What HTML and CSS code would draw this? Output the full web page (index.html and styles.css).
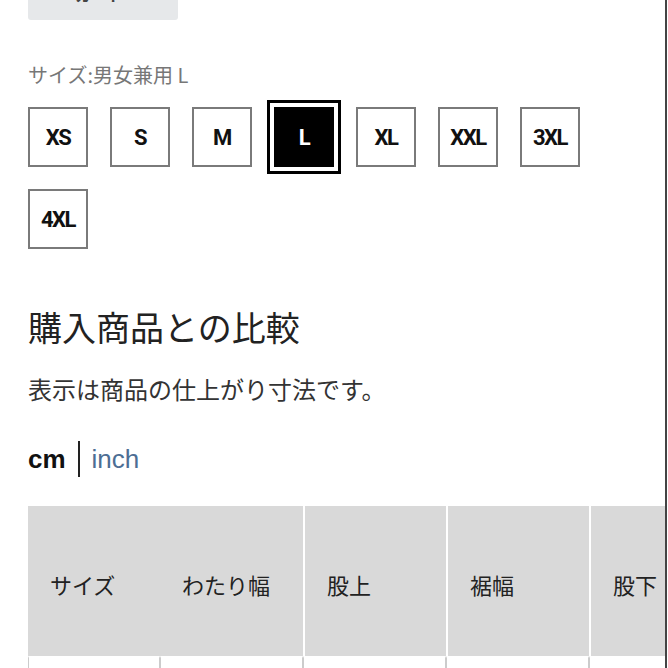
FILE: index.html
```html
<!DOCTYPE html>
<html lang="ja">

<head>
    <meta charset="UTF-8">
    <title>サイズ</title>
    <link rel="stylesheet" href="styles.css">
</head>

<body>
    <div class="page">
        <div class="top-button"><span>カート</span></div>

        <p class="size-label">サイズ:男女兼用 L</p>
        <div class="sizes">
            <button class="size">XS</button>
            <button class="size">S</button>
            <button class="size">M</button>
            <button class="size selected">L</button>
            <button class="size">XL</button>
            <button class="size">XXL</button>
            <button class="size">3XL</button>
            <button class="size">4XL</button>
        </div>

        <h2 class="compare-title">購入商品との比較</h2>
        <p class="compare-note">表示は商品の仕上がり寸法です。</p>

        <div class="units">
            <span class="unit active">cm</span>
            <span class="unit-divider"></span>
            <span class="unit">inch</span>
        </div>

        <div class="table-wrap">
            <table class="size-table">
                <thead>
                    <tr>
                        <th class="col-size">サイズ</th>
                        <th>わたり幅</th>
                        <th class="sep">股上</th>
                        <th class="sep">裾幅</th>
                        <th class="sep">股下</th>
                        <th class="sep">総丈</th>
                    </tr>
                </thead>
                <tbody>
                    <tr>
                        <td class="col-size">L</td>
                        <td>37.5</td>
                        <td>31.5</td>
                        <td>23</td>
                        <td>76</td>
                        <td>104</td>
                    </tr>
                </tbody>
            </table>
        </div>
    </div>
</body>

</html>
```

FILE: styles.css
```css
* {
    box-sizing: border-box;
}

body {
    margin: 0;
    background-color: #fff;
    font-family: "Noto Sans CJK JP", "Noto Sans", sans-serif;
    color: #222;
}

.page {
    width: 667px;
    height: 668px;
    padding-left: 28px;
    border-right: 2px solid #444;
    overflow: hidden;
}

.top-button {
    width: 150px;
    height: 20px;
    background-color: #e6e8ea;
    border-radius: 0 0 3px 3px;
    overflow: hidden;
}

.top-button span {
    display: block;
    margin: -14px 0 0 47px;
    font-size: 16px;
    font-weight: bold;
    line-height: 16px;
    color: #444;
}

.size-label {
    margin: 43px 0 0;
    font-size: 20px;
    line-height: 24px;
    color: #777;
}

.sizes {
    display: flex;
    flex-wrap: wrap;
    gap: 22px;
    width: 600px;
    margin-top: 20px;
}

.size {
    width: 60px;
    height: 60px;
    padding: 0;
    background-color: #fff;
    border: 2px solid #7a7a7a;
    font-family: "Roboto", "Liberation Sans", sans-serif;
    font-size: 22px;
    font-weight: bold;
    letter-spacing: -1.5px;
    color: #111;
}

.size.selected {
    background-color: #000;
    border-color: #000;
    color: #fff;
    outline: 3px solid #000;
    outline-offset: 4px;
}

.compare-title {
    margin: 58px 0 0;
    font-size: 34px;
    font-weight: normal;
    line-height: 40px;
    color: #222;
}

.compare-note {
    margin: 27px 0 0;
    font-size: 24px;
    line-height: 30px;
    color: #333;
}

.units {
    display: flex;
    align-items: center;
    gap: 12px;
    height: 36px;
    margin-top: 37px;
    font-family: "Liberation Sans", "Roboto", sans-serif;
    font-size: 26px;
}

.unit {
    color: #4d6e94;
}

.unit.active {
    font-weight: bold;
    color: #111;
}

.unit-divider {
    width: 2px;
    height: 36px;
    background-color: #222;
}

.table-wrap {
    margin-top: 29px;
    overflow: hidden;
}

.size-table {
    table-layout: fixed;
    width: 847px;
    border-collapse: separate;
    border-spacing: 0;
    font-size: 22px;
}

.size-table th {
    width: 143px;
    height: 150px;
    padding: 6px 0 0 22px;
    background-color: #d9d9d9;
    font-weight: normal;
    text-align: left;
    color: #222;
}

.size-table th.col-size {
    width: 132px;
}

.size-table th.sep {
    border-left: 2px solid #fff;
}

.size-table td {
    height: 60px;
    padding: 20px 0 0 22px;
    vertical-align: top;
    border: 1px solid #ccc;
    border-top: 2px solid #fff;
}
```
